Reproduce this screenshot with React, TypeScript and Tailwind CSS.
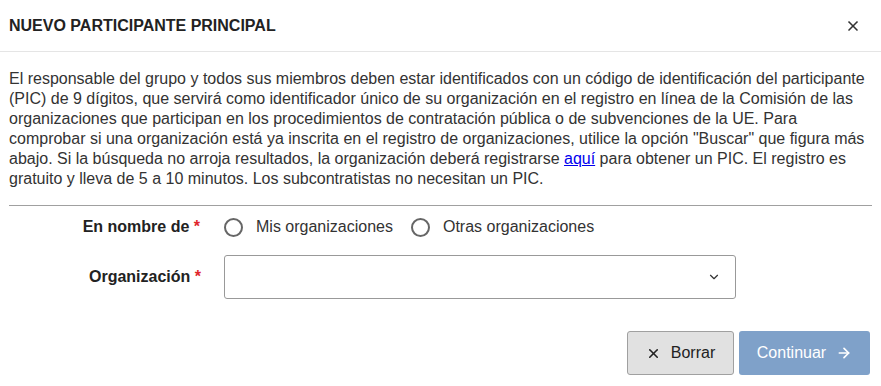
import { X, ChevronDown, ArrowRight } from 'lucide-react';

function Radio({ label }: { label: string }) {
  return (
    <label className="flex items-center gap-[13px] cursor-pointer">
      <span className="w-[19px] h-[19px] rounded-full border-2 border-[#666]" />
      <span>{label}</span>
    </label>
  );
}

export default function App() {
  return (
    <div className="w-[881px] h-[386px] bg-white text-[#333] font-['Liberation_Sans',Arial,sans-serif] text-[16px]">
      <div className="flex items-center justify-between h-[52px] pl-[9px] pr-[20px] border-b border-[#e5e5e5]">
        <h1 className="font-bold text-[16px] text-[#222]">NUEVO PARTICIPANTE PRINCIPAL</h1>
        <X size={16} strokeWidth={2.5} className="text-[#333]" />
      </div>

      <div className="px-[9px] pt-[17px]">
        <p className="leading-[20px]">
          El responsable del grupo y todos sus miembros deben estar identificados con un código de identificación del participante
          (PIC) de 9 dígitos, que servirá como identificador único de su organización en el registro en línea de la Comisión de las
          organizaciones que participan en los procedimientos de contratación pública o de subvenciones de la UE. Para comprobar
          si una organización está ya inscrita en el registro de organizaciones, utilice la opción "Buscar" que figura más abajo. Si
          la búsqueda no arroja resultados, la organización deberá registrarse{' '}
          <a href="#" className="text-[#0000ee] underline">aquí</a> para obtener un PIC. El registro es gratuito y lleva de 5 a 10
          minutos. Los subcontratistas no necesitan un PIC.
        </p>

        <div className="mt-[16px] border-t border-[#a0a0a0]" />

        <div className="flex items-center mt-[10px] h-[22px]">
          <div className="w-[191px] text-right font-bold text-[#222]">
            En nombre de <span className="text-[#e0262b]">*</span>
          </div>
          <div className="flex items-center gap-[18px] ml-[24px]">
            <Radio label="Mis organizaciones" />
            <Radio label="Otras organizaciones" />
          </div>
        </div>

        <div className="flex items-center mt-[17px]">
          <div className="w-[192px] text-right font-bold text-[#222]">
            Organización <span className="text-[#e0262b]">*</span>
          </div>
          <div className="ml-[23px] w-[512px] h-[44px] border border-[#999] rounded-[3px] flex items-center justify-end pr-[14px]">
            <ChevronDown size={14} strokeWidth={2} className="text-[#333]" />
          </div>
        </div>

        <div className="flex justify-end gap-[5px] mt-[32px] pr-[2px]">
          <button className="flex items-center gap-[10px] h-[44px] w-[107px] justify-center bg-[#e1e1e1] border border-[#a0a0a0] rounded-[3px] text-[#222]">
            <X size={15} strokeWidth={2.5} />
            <span>Borrar</span>
          </button>
          <button className="flex items-center gap-[10px] h-[44px] w-[131px] justify-center bg-[#7fa1c9] rounded-[3px] text-white">
            <span>Continuar</span>
            <ArrowRight size={16} strokeWidth={2.5} />
          </button>
        </div>
      </div>
    </div>
  );
}
